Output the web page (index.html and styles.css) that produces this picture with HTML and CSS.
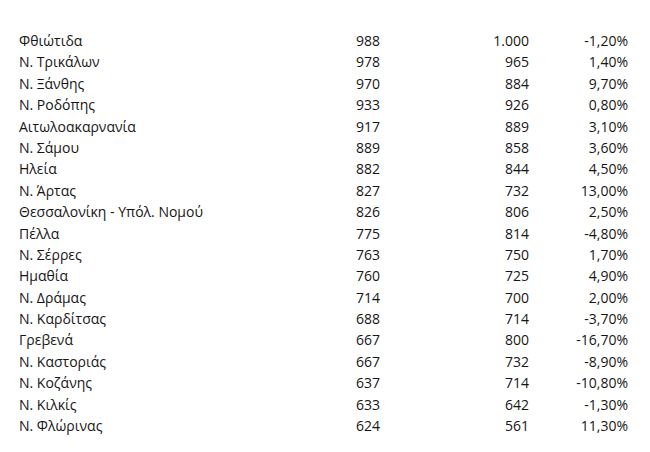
FILE: index.html
```html
<!DOCTYPE html>
<html lang="el">
<head>
<meta charset="utf-8">
<link rel="stylesheet" href="styles.css">
</head>
<body>
<div class="sheet">
  <div class="row"><span class="name">Φθιώτιδα</span><span class="num">988</span><span class="num">1.000</span><span class="num">-1,20%</span></div>
  <div class="row"><span class="name">Ν. Τρικάλων</span><span class="num">978</span><span class="num">965</span><span class="num">1,40%</span></div>
  <div class="row"><span class="name">Ν. Ξάνθης</span><span class="num">970</span><span class="num">884</span><span class="num">9,70%</span></div>
  <div class="row"><span class="name">Ν. Ροδόπης</span><span class="num">933</span><span class="num">926</span><span class="num">0,80%</span></div>
  <div class="row"><span class="name">Αιτωλοακαρνανία</span><span class="num">917</span><span class="num">889</span><span class="num">3,10%</span></div>
  <div class="row"><span class="name">Ν. Σάμου</span><span class="num">889</span><span class="num">858</span><span class="num">3,60%</span></div>
  <div class="row"><span class="name">Ηλεία</span><span class="num">882</span><span class="num">844</span><span class="num">4,50%</span></div>
  <div class="row"><span class="name">Ν. Άρτας</span><span class="num">827</span><span class="num">732</span><span class="num">13,00%</span></div>
  <div class="row"><span class="name">Θεσσαλονίκη - Υπόλ. Νομού</span><span class="num">826</span><span class="num">806</span><span class="num">2,50%</span></div>
  <div class="row"><span class="name">Πέλλα</span><span class="num">775</span><span class="num">814</span><span class="num">-4,80%</span></div>
  <div class="row"><span class="name">Ν. Σέρρες</span><span class="num">763</span><span class="num">750</span><span class="num">1,70%</span></div>
  <div class="row"><span class="name">Ημαθία</span><span class="num">760</span><span class="num">725</span><span class="num">4,90%</span></div>
  <div class="row"><span class="name">Ν. Δράμας</span><span class="num">714</span><span class="num">700</span><span class="num">2,00%</span></div>
  <div class="row"><span class="name">Ν. Καρδίτσας</span><span class="num">688</span><span class="num">714</span><span class="num">-3,70%</span></div>
  <div class="row"><span class="name">Γρεβενά</span><span class="num">667</span><span class="num">800</span><span class="num">-16,70%</span></div>
  <div class="row"><span class="name">Ν. Καστοριάς</span><span class="num">667</span><span class="num">732</span><span class="num">-8,90%</span></div>
  <div class="row"><span class="name">Ν. Κοζάνης</span><span class="num">637</span><span class="num">714</span><span class="num">-10,80%</span></div>
  <div class="row"><span class="name">Ν. Κιλκίς</span><span class="num">633</span><span class="num">642</span><span class="num">-1,30%</span></div>
  <div class="row"><span class="name">Ν. Φλώρινας</span><span class="num">624</span><span class="num">561</span><span class="num">11,30%</span></div>
</div>
</body>
</html>
```
FILE: styles.css
```css
html, body {
  margin: 0;
  padding: 0;
  background: #ffffff;
}
body {
  width: 650px;
  height: 452px;
  overflow: hidden;
  font-family: "Open Sans", "Noto Sans", sans-serif;
  font-size: 14px;
  color: #161616;
}
.sheet {
  padding: 30px 0 0 19px;
  display: flex;
  flex-direction: column;
}
.row {
  display: grid;
  grid-template-columns: 281px 80px 149px 99px;
  height: 21.4px;
  line-height: 21.4px;
  white-space: nowrap;
}
.num {
  text-align: right;
}
```
